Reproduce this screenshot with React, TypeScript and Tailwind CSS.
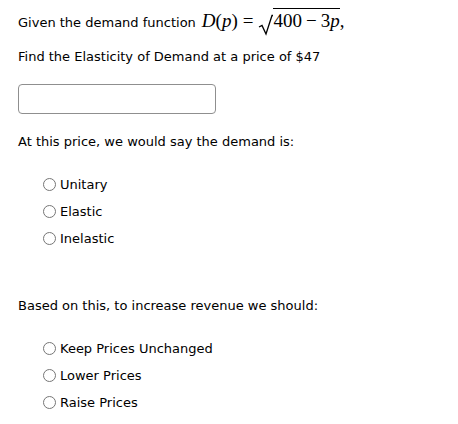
function Radio({ label }: { label: string }) {
  return (
    <div className="flex items-center h-[27px]">
      <span className="w-[13px] h-[13px] rounded-full border border-[#767676] bg-white shrink-0" />
      <span className="ml-[4px]">{label}</span>
    </div>
  );
}

export default function App() {
  return (
    <div
      className="w-[458px] h-[424px] bg-white text-black text-[13px] leading-[16px] px-[18px]"
      style={{ fontFamily: '"DejaVu Sans", sans-serif' }}
    >
      {/* enunciado */}
      <div className="flex items-baseline pt-[8px] h-[34px]">
        <span>Given the demand function</span>
        <span
          className="ml-[6px] flex items-baseline text-[19px] leading-[22px]"
          style={{ fontFamily: '"Liberation Serif", serif' }}
        >
          <i>D</i>
          <span>(</span>
          <i>p</i>
          <span>)</span>
          <span className="mx-[5px]">=</span>
          <span className="relative flex items-baseline">
            <svg width="15" height="22" viewBox="0 0 15 22" className="self-end mb-[-4px]">
              <path d="M1 13 L4 11.5 L8 20 L14 1.5 L15 1.5" fill="none" stroke="#000" strokeWidth="1.3" />
            </svg>
            <span className="border-t border-black pt-[1px] flex items-baseline">
              <span>400</span>
              <span className="mx-[4px]">−</span>
              <span>3</span>
              <i>p</i>
            </span>
          </span>
          <span>,</span>
        </span>
      </div>

      <p className="mt-[15px]">Find the Elasticity of Demand at a price of $47</p>

      <input
        type="text"
        className="mt-[19px] block w-[198px] h-[30px] rounded-[4px] border border-[#8f8f8f] bg-white"
      />

      <p className="mt-[20px]">At this price, we would say the demand is:</p>

      <div className="mt-[21px] pl-[25px]">
        <Radio label="Unitary" />
        <Radio label="Elastic" />
        <Radio label="Inelastic" />
      </div>

      <p className="mt-[46px]">Based on this, to increase revenue we should:</p>

      <div className="mt-[21px] pl-[25px]">
        <Radio label="Keep Prices Unchanged" />
        <Radio label="Lower Prices" />
        <Radio label="Raise Prices" />
      </div>
    </div>
  );
}
